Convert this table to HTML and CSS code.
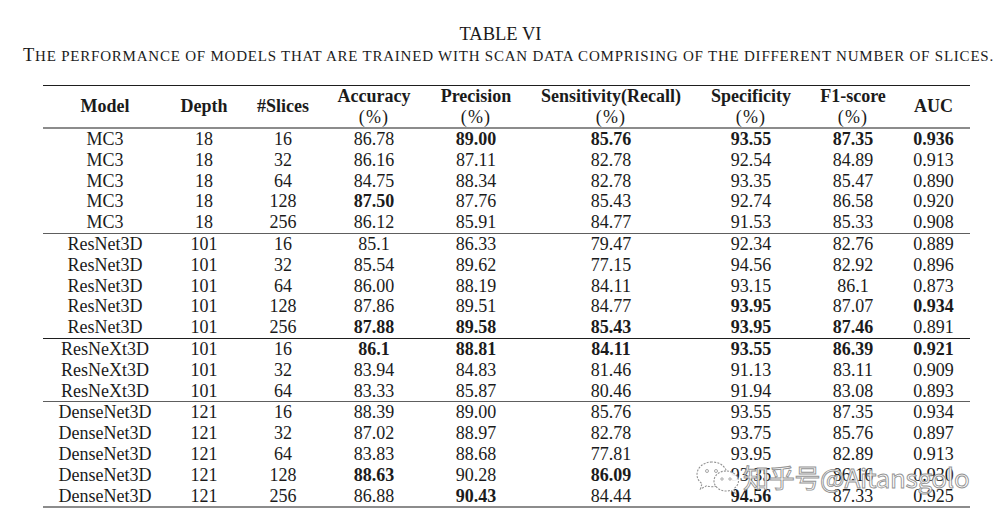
FILE: index.html
```html
<!DOCTYPE html>
<html>
<head>
<meta charset="utf-8">
<link rel="stylesheet" href="styles.css">
</head>
<body>
<div class="page">
  <div class="cap-title">TABLE VI</div>
  <div class="cap-sub"><span class="cap-first">T</span><span class="cap-rest">he performance of models that are trained with scan data comprising of the different number of slices.</span></div>
  <div class="table-wrap">
    <table class="results">
      <colgroup>
        <col class="c1"><col class="c2"><col class="c3"><col class="c4"><col class="c5"><col class="c6"><col class="c7"><col class="c8"><col class="c9">
      </colgroup>
      <thead>
        <tr>
          <th>Model</th><th>Depth</th><th>#Slices</th>
          <th>Accuracy<br><span class="pct">(%)</span></th>
          <th>Precision<br><span class="pct">(%)</span></th>
          <th>Sensitivity(Recall)<br><span class="pct">(%)</span></th>
          <th>Specificity<br><span class="pct">(%)</span></th>
          <th>F1-score<br><span class="pct">(%)</span></th>
          <th>AUC</th>
        </tr>
      </thead>
      <tbody>
        <tr><td>MC3</td><td>18</td><td>16</td><td>86.78</td><td class="b">89.00</td><td class="b">85.76</td><td class="b">93.55</td><td class="b">87.35</td><td class="b">0.936</td></tr>
        <tr><td>MC3</td><td>18</td><td>32</td><td>86.16</td><td>87.11</td><td>82.78</td><td>92.54</td><td>84.89</td><td>0.913</td></tr>
        <tr><td>MC3</td><td>18</td><td>64</td><td>84.75</td><td>88.34</td><td>82.78</td><td>93.35</td><td>85.47</td><td>0.890</td></tr>
        <tr><td>MC3</td><td>18</td><td>128</td><td class="b">87.50</td><td>87.76</td><td>85.43</td><td>92.74</td><td>86.58</td><td>0.920</td></tr>
        <tr class="sep-gray"><td>MC3</td><td>18</td><td>256</td><td>86.12</td><td>85.91</td><td>84.77</td><td>91.53</td><td>85.33</td><td>0.908</td></tr>
        <tr><td>ResNet3D</td><td>101</td><td>16</td><td>85.1</td><td>86.33</td><td>79.47</td><td>92.34</td><td>82.76</td><td>0.889</td></tr>
        <tr><td>ResNet3D</td><td>101</td><td>32</td><td>85.54</td><td>89.62</td><td>77.15</td><td>94.56</td><td>82.92</td><td>0.896</td></tr>
        <tr><td>ResNet3D</td><td>101</td><td>64</td><td>86.00</td><td>88.19</td><td>84.11</td><td>93.15</td><td>86.1</td><td>0.873</td></tr>
        <tr><td>ResNet3D</td><td>101</td><td>128</td><td>87.86</td><td>89.51</td><td>84.77</td><td class="b">93.95</td><td>87.07</td><td class="b">0.934</td></tr>
        <tr class="sep-dark"><td>ResNet3D</td><td>101</td><td>256</td><td class="b">87.88</td><td class="b">89.58</td><td class="b">85.43</td><td class="b">93.95</td><td class="b">87.46</td><td>0.891</td></tr>
        <tr><td>ResNeXt3D</td><td>101</td><td>16</td><td class="b">86.1</td><td class="b">88.81</td><td class="b">84.11</td><td class="b">93.55</td><td class="b">86.39</td><td class="b">0.921</td></tr>
        <tr><td>ResNeXt3D</td><td>101</td><td>32</td><td>83.94</td><td>84.83</td><td>81.46</td><td>91.13</td><td>83.11</td><td>0.909</td></tr>
        <tr class="sep-gray"><td>ResNeXt3D</td><td>101</td><td>64</td><td>83.33</td><td>85.87</td><td>80.46</td><td>91.94</td><td>83.08</td><td>0.893</td></tr>
        <tr><td>DenseNet3D</td><td>121</td><td>16</td><td>88.39</td><td>89.00</td><td>85.76</td><td>93.55</td><td>87.35</td><td>0.934</td></tr>
        <tr><td>DenseNet3D</td><td>121</td><td>32</td><td>87.02</td><td>88.97</td><td>82.78</td><td>93.75</td><td>85.76</td><td>0.897</td></tr>
        <tr><td>DenseNet3D</td><td>121</td><td>64</td><td>83.83</td><td>88.68</td><td>77.81</td><td>93.95</td><td>82.89</td><td>0.913</td></tr>
        <tr><td>DenseNet3D</td><td>121</td><td>128</td><td class="b">88.63</td><td>90.28</td><td class="b">86.09</td><td>93.35</td><td>86.16</td><td>0.930</td></tr>
        <tr class="last"><td>DenseNet3D</td><td>121</td><td>256</td><td>86.88</td><td class="b">90.43</td><td>84.44</td><td class="b">94.56</td><td>87.33</td><td>0.925</td></tr>
      </tbody>
    </table>
    <div class="watermark">
      <svg class="wm-icon" width="46" height="36" viewBox="0 0 46 36">
        <path d="M17 3 C8 3 2 9 2 15.5 C2 19.5 4 22.5 7 24.5 L5.5 30 L11.5 26.8 C13.2 27.4 15 27.7 17 27.7 C26 27.7 32 22 32 15.5 C32 9 26 3 17 3 Z" fill="#fff" stroke="#8a8a8a" stroke-width="1.1" stroke-dasharray="2 1.3"/>
        <path d="M31 12 C24 12 19 16.8 19 22 C19 27.2 24 32 31 32 C32.5 32 34 31.8 35.3 31.3 L40 34 L38.8 29.5 C41.6 27.8 43.5 25 43.5 22 C43.5 16.8 38 12 31 12 Z" fill="#fff" stroke="#8a8a8a" stroke-width="1.1" stroke-dasharray="2 1.3"/>
        <circle cx="12" cy="12" r="1.5" fill="#fff" stroke="#8a8a8a" stroke-width="0.8"/>
        <circle cx="21" cy="12" r="1.5" fill="#fff" stroke="#8a8a8a" stroke-width="0.8"/>
        <circle cx="27" cy="20" r="1.2" fill="#fff" stroke="#8a8a8a" stroke-width="0.8"/>
        <circle cx="35" cy="20" r="1.2" fill="#fff" stroke="#8a8a8a" stroke-width="0.8"/>
      </svg>
      <span class="wm-text">知乎号@Aitansgolo</span>
    </div>
  </div>
</div>
</body>
</html>
```

FILE: styles.css
```css
html, body {
  margin: 0;
  padding: 0;
  background: #ffffff;
}
.page {
  width: 1001px;
  height: 519px;
  overflow: hidden;
  font-family: "Liberation Serif", "Times New Roman", serif;
  color: #1b1b1b;
  padding-top: 24px;
  box-sizing: border-box;
}
.cap-title {
  text-align: center;
  font-size: 18.5px;
  line-height: 20px;
  height: 20px;
}
.cap-sub {
  text-align: center;
  line-height: 20px;
  height: 20px;
  margin-top: 1px;
  padding-left: 16px;
  white-space: nowrap;
}
.cap-first {
  font-size: 18.5px;
  letter-spacing: 0.78px;
}
.cap-rest {
  font-size: 15px;
  text-transform: uppercase;
  letter-spacing: 0.78px;
}
.table-wrap {
  position: relative;
  margin-top: 20px;
}
.results {
  margin-left: 43px;
  width: 927px;
  table-layout: fixed;
  border-collapse: collapse;
  font-size: 18px;
  border-top: 1.4px solid #1e1e1e;
}
.c1 { width: 124px; }
.c2 { width: 74px; }
.c3 { width: 84px; }
.c4 { width: 98px; }
.c5 { width: 106px; }
.c6 { width: 164px; }
.c7 { width: 116px; }
.c8 { width: 88px; }
.c9 { width: 73px; }
.results th,
.results td {
  padding: 0;
  text-align: center;
  white-space: nowrap;
}
.results th {
  font-weight: bold;
  line-height: 20.5px;
  height: 41px;
  border-bottom: 2px solid #8c8c8c;
}
.results th .pct {
  font-weight: normal;
  letter-spacing: 1.2px;
}
.results td {
  line-height: 20.8px;
  height: 20.8px;
}
.results td.b {
  font-weight: bold;
}
.results tr.sep-gray td {
  border-bottom: 1.3px solid #5e5e5e;
}
.results tr.sep-dark td {
  border-bottom: 1.4px solid #1e1e1e;
}
.results tr.last td {
  border-bottom: 2px solid #8c8c8c;
}
.watermark {
  position: absolute;
  left: 695px;
  top: 374px;
  display: flex;
  align-items: center;
  gap: 2px;
  opacity: 0.92;
}
.wm-icon {
  display: block;
}
.wm-text {
  font-family: "Noto Sans CJK SC", "Noto Sans", sans-serif;
  font-size: 26px;
  line-height: 30px;
  color: #ffffff;
  -webkit-text-stroke: 0.9px #8a8a8a;
  letter-spacing: -0.3px;
}
```
